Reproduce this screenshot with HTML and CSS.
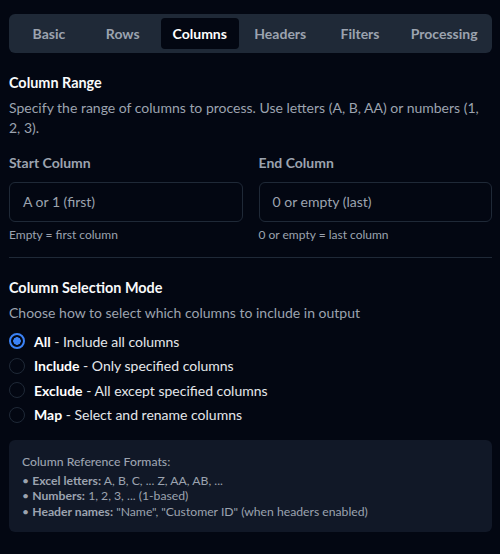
FILE: index.html
```html
<!DOCTYPE html>
<html>
<head>
<meta charset="utf-8">
<link rel="stylesheet" href="styles.css">
</head>
<body>
<div class="page">
  <div class="tabs">
    <div class="tab">Basic</div>
    <div class="tab">Rows</div>
    <div class="tab active">Columns</div>
    <div class="tab">Headers</div>
    <div class="tab">Filters</div>
    <div class="tab">Processing</div>
  </div>

  <section class="section first">
    <h3 class="title">Column Range</h3>
    <p class="desc">Specify the range of columns to process. Use letters (A, B, AA) or numbers (1, 2, 3).</p>
    <div class="grid">
      <div class="field">
        <label class="label">Start Column</label>
        <div class="input">A or 1 (first)</div>
        <div class="hint">Empty = first column</div>
      </div>
      <div class="field">
        <label class="label">End Column</label>
        <div class="input">0 or empty (last)</div>
        <div class="hint">0 or empty = last column</div>
      </div>
    </div>
  </section>

  <div class="divider"></div>

  <section class="section">
    <h3 class="title">Column Selection Mode</h3>
    <p class="desc">Choose how to select which columns to include in output</p>
    <div class="radios">
      <div class="radio-row"><span class="radio checked"></span><span class="rlabel"><b>All</b> - Include all columns</span></div>
      <div class="radio-row"><span class="radio"></span><span class="rlabel"><b>Include</b> - Only specified columns</span></div>
      <div class="radio-row"><span class="radio"></span><span class="rlabel"><b>Exclude</b> - All except specified columns</span></div>
      <div class="radio-row"><span class="radio"></span><span class="rlabel"><b>Map</b> - Select and rename columns</span></div>
    </div>
  </section>

  <div class="info">
    <div class="info-title">Column Reference Formats:</div>
    <div class="info-line">• <b>Excel letters:</b> A, B, C, ... Z, AA, AB, ...</div>
    <div class="info-line">• <b>Numbers:</b> 1, 2, 3, ... (1-based)</div>
    <div class="info-line">• <b>Header names:</b> "Name", "Customer ID" (when headers enabled)</div>
  </div>
</div>
</body>
</html>
```

FILE: styles.css
```css
* { box-sizing: border-box; }
html, body { margin: 0; padding: 0; background: #030712; }
body {
  font-family: Lato, "Noto Sans", sans-serif;
  color: #f9fafb;
  font-size: 14px;
}
.page { padding: 14px 8px 0 9px; }
.tabs {
  display: grid;
  grid-template-columns: 71.75px 76px 80px 79px 80.5px 1fr;
  background: #1f2937;
  border-radius: 6px;
  padding: 4px;
  height: 39px;
}
.tab {
  text-align: center;
  color: #9ca3af;
  font-weight: 700;
  font-size: 14px;
  line-height: 31px;
  border-radius: 4px;
}
.tab.active { background: #030712; color: #fff; margin-right: 2px; }

.section { margin-top: 20px; }
.section.first { margin-top: 20px; }
.title { margin: 0; font-size: 14.4px; font-weight: 700; color: #f9fafb; line-height: 20px; }
.desc { margin: 5px 0 0; color: #9ca3af; font-size: 14px; line-height: 20px; }
.grid { display: grid; grid-template-columns: 1fr 1fr; gap: 16px; margin-top: 15px; }
.field { display: flex; flex-direction: column; }
.label { color: #9ca3af; font-weight: 700; font-size: 14px; line-height: 20px; }
.input {
  margin-top: 9px;
  height: 40px;
  border: 1px solid #1f2937;
  border-radius: 6px;
  padding: 0 13px;
  line-height: 38px;
  color: #9ca3af;
  font-size: 14px;
}
.hint { margin-top: 5px; font-size: 12px; color: #9ca3af; line-height: 16px; }
.divider { height: 1px; background: #1f2937; margin-top: 14px; }
.radios { margin-top: 8px; display: flex; flex-direction: column; gap: 4.5px; }
.radio-row { display: flex; align-items: center; gap: 9px; height: 20px; }
.radio {
  width: 16px; height: 16px; border-radius: 50%;
  border: 1.5px solid #1f2937;
  flex: none;
}
.radio.checked {
  border: 2px solid #3b82f6;
  background: radial-gradient(circle, #3b82f6 0 3.5px, #030712 4px);
}
.rlabel { color: #e5e7eb; font-size: 14px; }
.rlabel b { color: #fff; font-weight: 700; }
.info {
  margin-top: 15px;
  background: #111827;
  border-radius: 6px;
  padding: 13px 13px 13px;
  font-size: 12.2px;
  color: #9ca3af;
}
.info-title { font-weight: 500; line-height: 18px; margin-bottom: 2px; }
.info-line { line-height: 15.5px; }
.info-line b { font-weight: 700; }
```
